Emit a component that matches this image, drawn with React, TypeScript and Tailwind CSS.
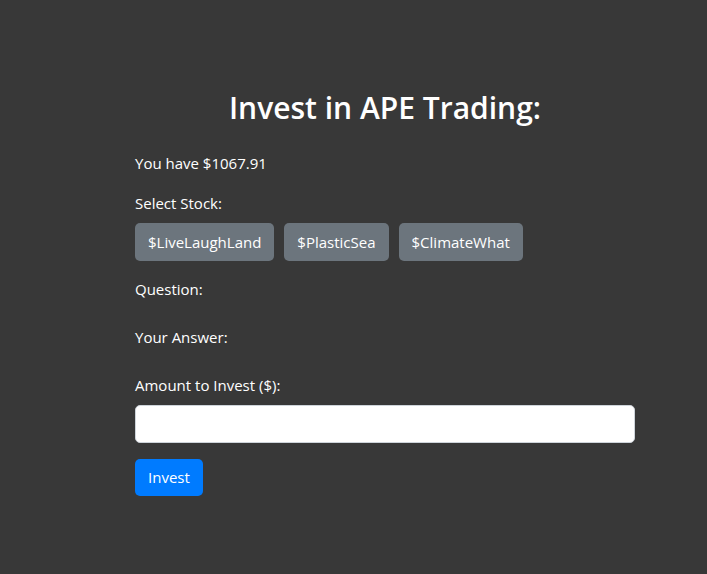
import React, { useState } from "react";

const STOCKS = ["$LiveLaughLand", "$PlasticSea", "$ClimateWhat"];

const App = () => {
  const [amount, setAmount] = useState("");

  return (
    <div
      className="min-h-[574px] w-full bg-[#383838] text-white"
      style={{ fontFamily: '"Open Sans", "Noto Sans", sans-serif' }}
    >
      <div className="ml-[135px] w-[500px] pt-[89px]">
        <h2 className="mb-6 text-center text-[30px] font-semibold leading-[38px]">
          Invest in APE Trading:
        </h2>
        <p className="mb-4 text-[15px] leading-6">You have $1067.91</p>
        <p className="mb-2 text-[15px] leading-6">Select Stock:</p>
        <div className="mb-4 flex gap-[10px]">
          {STOCKS.map((s) => (
            <button
              key={s}
              className="h-[38px] rounded-[5px] bg-[#6c757d] px-[13px] text-[15px] text-white"
            >
              {s}
            </button>
          ))}
        </div>
        <p className="mb-6 text-[15px] leading-6">Question:</p>
        <p className="mb-6 text-[15px] leading-6">Your Answer:</p>
        <label className="mb-2 block text-[15px] leading-6">
          Amount to Invest ($):
        </label>
        <input
          type="number"
          value={amount}
          onChange={(e) => setAmount(e.target.value)}
          className="mb-4 block h-[38px] w-full rounded-[5px] border border-[#ced4da] bg-white px-3 text-[#495057] outline-none"
        />
        <button className="h-[37px] rounded-[5px] bg-[#007bff] px-[13px] text-[15px] text-white">
          Invest
        </button>
      </div>
    </div>
  );
};

export default App;
